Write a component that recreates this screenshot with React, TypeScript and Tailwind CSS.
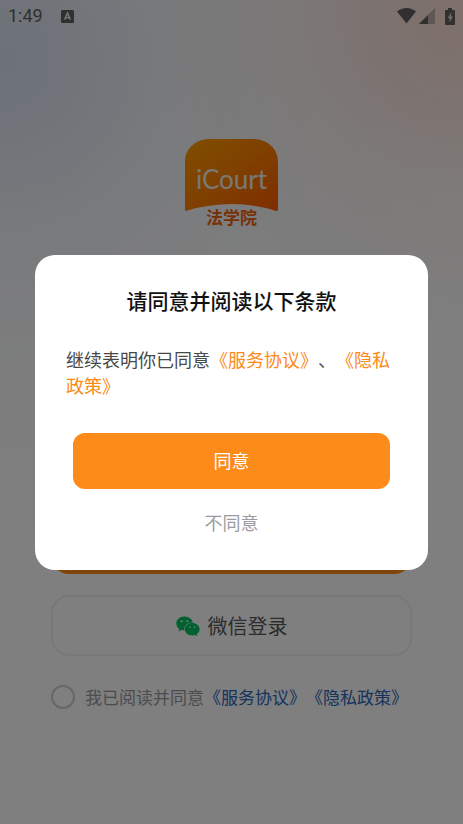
import React from "react";

function StatusBar() {
  return (
    <header className="flex h-8 items-center justify-between pl-2 pr-2 text-[#606060]">
      <div className="flex items-center gap-[18px]">
        <time className="font-['Roboto',sans-serif] text-[18px] leading-5">1:49</time>
        <svg className="h-[13px] w-[13px]" viewBox="0 0 13 13" aria-hidden="true">
          <rect width="13" height="13" rx="1.5" fill="currentColor" />
          <path d="M3.6 9.6 6.5 3l2.9 6.6M4.6 7.8h3.8" fill="none" stroke="#dfe4ec" strokeWidth="1.6" />
        </svg>
      </div>
      <div className="flex items-center gap-[3px]">
        <svg className="h-4 w-[19px]" viewBox="0 0 19 16" aria-hidden="true">
          <path d="M0 3.6C2.6 1.3 5.9 0 9.500 0S16.400 1.300 19 3.600L9.500 15.600Z" fill="currentColor" />
        </svg>
        <svg className="h-4 w-4" viewBox="0 0 16 16" aria-hidden="true">
          <path d="M16 0v16H0Z" fill="#bdaea8" />
          <path d="M9 7v9H0Z" fill="currentColor" />
        </svg>
        <svg className="ml-[7px] h-[17px] w-[10px]" viewBox="0 0 10 17" aria-hidden="true">
          <path d="M3 0h4v2h2a1 1 0 0 1 1 1v13a1 1 0 0 1-1 1H1a1 1 0 0 1-1-1V3a1 1 0 0 1 1-1h2Z" fill="currentColor" />
          <path d="M6.300 4 2.600 10.200h2v4.400L8 8.400H6Z" fill="#e0d2cb" />
        </svg>
      </div>
    </header>
  );
}

function Logo() {
  return (
    <div className="grid w-[93px] justify-items-center">
      <svg className="col-start-1 row-start-1 h-[72px] w-[93px]" viewBox="0 0 93 72" aria-hidden="true">
        <defs>
          <linearGradient id="brand" x1="0" y1="0" x2="1" y2="1">
            <stop offset="0" stopColor="#ff9c00" />
            <stop offset="0.5" stopColor="#ff8000" />
            <stop offset="1" stopColor="#ff5a00" />
          </linearGradient>
        </defs>
        <path
          d="M25 0H68C83 0 93 10 93 23V71Q92 72.500 90 71.500Q69 65 46.500 65Q24 65 2 71.500Q0 72.500 0 71V23C0 10 10 0 25 0Z"
          fill="url(#brand)"
        />
      </svg>
      <span className="col-start-1 row-start-1 mt-6 font-['Lato',sans-serif] text-[26px] leading-8 text-[#f4f0ec]">
        iCourt
      </span>
      <span className="-mt-1 text-[17px] font-bold leading-5 text-[#ee6210]">法学院</span>
    </div>
  );
}

function WechatIcon() {
  return (
    <svg className="h-5 w-6" viewBox="0 0 24 20" aria-hidden="true">
      <path
        d="M8.500.5C4 .5.300 3.500.300 7.500c0 2.300 1.200 4.200 3 5.500L2.600 15.600 5.600 14c1 .3 2 .5 3.200.5 4.500 0 8.100-3.100 8.100-7S13 .5 8.500.5Z"
        fill="#07c160"
      />
      <ellipse cx="16.200" cy="13.200" rx="7.900" ry="6.700" fill="#fdfdfd" />
      <path
        d="M16.200 7c-4 0-7.300 2.700-7.300 6.200s3.300 6.200 7.300 6.200c1 0 1.900-.2 2.700-.4l2.500 1-.6-2c1.700-1.200 2.800-2.900 2.800-4.800C23.600 9.700 20.200 7 16.200 7Z"
        fill="#07c160"
      />
      <g fill="#fdfdfd">
        <circle cx="5.600" cy="5.200" r="1" />
        <circle cx="11.400" cy="5.200" r="1" />
        <circle cx="13.900" cy="11.300" r=".8" />
        <circle cx="18.500" cy="11.300" r=".8" />
      </g>
    </svg>
  );
}

function LoginPage() {
  return (
    <div className="min-h-screen bg-[#fefefe] bg-[radial-gradient(circle_at_0_60px,rgba(110,150,206,0.25)_0,rgba(110,150,206,0.18)_90px,rgba(110,140,190,0.07)_190px,rgba(110,140,190,0.03)_300px,rgba(110,140,190,0)_500px),radial-gradient(circle_at_100%_10px,rgba(255,134,86,0.25)_0,rgba(240,120,80,0.17)_90px,rgba(230,130,90,0.08)_170px,rgba(230,150,110,0)_320px)]">
      <StatusBar />
      <main className="flex flex-col items-center px-[51px] pt-[107px]">
        <Logo />
        <div className="mt-[286px] flex w-full flex-col gap-[21px]">
          <button type="button" aria-label="登录" className="h-[61px] rounded-[18px] bg-[#fc8a18]" />
          <button
            type="button"
            className="flex h-[61px] items-center justify-center gap-2 rounded-[18px] border-2 border-[#f1f1f1] text-[20px] text-[#585858]"
          >
            <WechatIcon />
            微信登录
          </button>
        </div>
        <div className="mt-7 flex w-full items-center gap-[10px] whitespace-nowrap text-[17px] leading-[26px]">
          <input
            id="consent"
            type="checkbox"
            className="h-6 w-6 shrink-0 appearance-none rounded-full border-2 border-[#cfcfcf] checked:bg-[#fc8a18]"
          />
          <div className="text-[#97999d]">
            <label htmlFor="consent">我已阅读并同意</label>
            <a href="#service" className="text-[#2a66b8]">《服务协议》</a>
            <a href="#privacy" className="text-[#2a66b8]">《隐私政策》</a>
          </div>
        </div>
      </main>
    </div>
  );
}

function TermsDialog() {
  return (
    <div className="fixed inset-0 flex items-center justify-center bg-black/50 px-[35px]">
      <section
        role="dialog"
        aria-modal="true"
        aria-labelledby="terms-title"
        className="flex w-full flex-col rounded-[20px] bg-white px-[31px] pb-[29px] pt-[30px]"
      >
        <h1 id="terms-title" className="text-center text-[21px] font-medium leading-[30px] text-[#111111]">
          请同意并阅读以下条款
        </h1>
        <p className="mt-[31px] text-[18px] leading-[26px] text-[#484848]">
          继续表明你已同意<a href="#service" className="text-[#fc8a18]">《服务协议》</a>、<a href="#privacy" className="text-[#fc8a18]">《隐私政策》</a>
        </p>
        <div className="mt-[35px] flex flex-col gap-4 px-[7px] text-[18px]">
          <button type="button" className="h-14 rounded-xl bg-[#fd8b1a] text-white">
            同意
          </button>
          <button type="button" className="h-9 text-[#9a9ca2]">
            不同意
          </button>
        </div>
      </section>
    </div>
  );
}

export default function App() {
  return (
    <div className="font-['Noto_Sans_CJK_SC',sans-serif] [text-spacing-trim:space-all]" lang="zh-CN">
      <LoginPage />
      <TermsDialog />
    </div>
  );
}
